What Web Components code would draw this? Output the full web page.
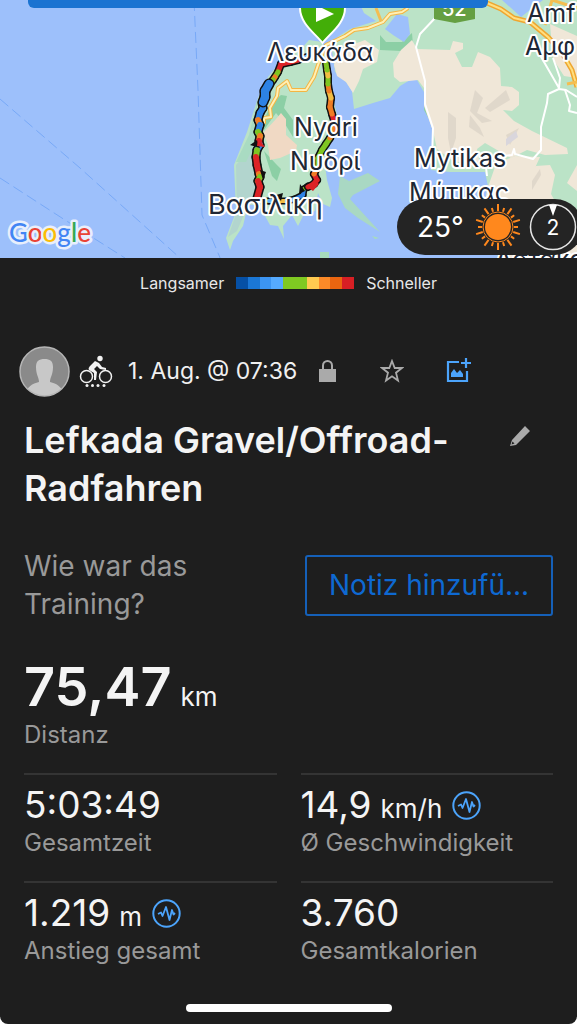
<!DOCTYPE html>
<html lang="de">
<head>
<meta charset="utf-8">
<meta name="viewport" content="width=device-width, initial-scale=1">
<title>Lefkada Gravel/Offroad-Radfahren</title>
<style>
html{background:#fff}
body{margin:0;font-family:Inter,"Noto Sans",sans-serif;color:#f4f4f4}
</style>
</head>
<body>
<workout-page></workout-page>
<script>
const define = (name, html, setup) => customElements.define(name, class extends HTMLElement {
  constructor() {
    super();
    const t = document.createElement('template');
    t.innerHTML = html;
    this.attachShadow({ mode: 'open' }).append(t.content.cloneNode(true));
  }
  connectedCallback() { if (setup) setup(this, this.shadowRoot); }
});

define('route-map', `
<style>
:host{display:block;position:relative;height:258px;overflow:hidden;background:#9dc0fb}
svg{display:block;width:100%;height:100%}
.label{font:25px Inter,"Noto Sans",sans-serif;fill:#202735;stroke:#fff;stroke-width:4;stroke-linejoin:round;paint-order:stroke}
.logo{font:500 26px Lato,sans-serif;stroke:#e8effc;stroke-width:5;stroke-linejoin:round;paint-order:stroke}
.banner{position:absolute;top:0;left:28px;right:89px;height:8px;background:#1b73d1;border-radius:0 0 6px 6px}
::slotted(*){position:absolute;right:-6px;bottom:3px}
</style>
<svg viewBox="0 0 577 258" preserveAspectRatio="xMidYMid slice" role="img" aria-label="Karte der Strecke">
  <g fill="none" stroke="#78a9f7" stroke-width="1" stroke-dasharray="11 5">
    <path d="M194 0 198 90 202 215 221 260"/><path d="M0 99 80 168 180 258"/><path d="M0 178 65 220 125 258"/>
  </g>
  <path fill="#bbe3c7" d="M358 0 364 13 376 21 350 29 339 36 331 43 335 72 346 82 352 91 354 109 373 103 390 98 400 86 410 80 417 80 424 92 425 105 432 128 433 150 431 170 450 172 485 172 488 186 484 205 480 225 495 240 503 258H577V0Z"/>
  <path fill="#bbe3c7" d="M302 48 309 40 322 42 329 58 331 90 337 115 333 138 324 158 327 180 332 198 330 207 323 204 318 193 315 211 303 216 298 226 292 215 283 226 284 239 278 226 270 225 259 205 248 205 243 226 233 241 230 250 226 238 236 212 234 165 247 132 258 98 268 77 281 61Z"/>
  <path fill="#b2d5ce" d="M236 165 254 145 259 203 248 205 237 231 228 237 237 211Z"/>
  <path fill="#a9dbc2" d="M257 101 249 135 236 162 246 162 257 139Z"/>
  <g fill="#8ccfa5">
    <path d="M271 104 281 95 287 96 284 108 293 120 293 137 285 124 276 113 264 130 262 125Z"/>
    <path d="M264 151 276 164 281 169 277 181 272 176Z"/>
    <path d="M380 35 386 42 402 42 412 33 413 45 401 51 380 50Z"/>
    <path d="M425 94 437 103 438 120 434 128 424 110Z"/>
  </g>
  <path fill="#f0d9c4" d="M263 133 276 119 281 113 286 119 286 135 297 145 296 151 280 158 270 160 268 145Z"/>
  <g fill="#f0e7d8">
    <path d="M334 65 338 50 365 40 379 50 377 62 363 69 359 81 353 93 346 82 337 76Z"/>
    <path d="M393 63 401 50 412 40 417 49 450 50 453 41 463 43 463 49 455 53 462 67 472 67 478 52 490 57 500 68 501 86 512 87 519 92 519 105 512 111 503 110 514 121 532 131 567 148 568 154 545 155 527 150 511 158 485 143 477 149 480 165 469 165 452 160 437 149 433 131 424 106 424 88 418 80 400 82 394 77Z"/>
    <path d="M550 24 577 36V78L564 76 553 59Z"/><path d="M577 165 567 183 577 191Z"/>
    <path d="M496 164 515 156 540 157 535 168 536 166 550 165 555 175 551 194 560 210 577 222V258H500L483 221 487 190Z"/>
  </g>
  <g fill="#d9d1c5" opacity=".65">
    <path d="m448 112 8 6 0 20-5 15-3-15Z"/><path d="m470 115 10 13 4 9-15-10Z"/><path d="m485 108 21-18 4 10-20 12Z"/><path d="m475 90 8 8-6 15 15 8-10 2-12-12Z"/><path d="m506 135 13-7-9 17Z"/><path d="m532 181 8-12 1 6-9 15Z"/>
  </g>
  <g fill="#9dc0fb"><path d="M385 29 397 14 408 17 410 34 404 42 393 35Z"/><path d="M502 0H543L530 10 521 17Z"/></g>
  <path fill="#d9d6dc" d="m506 139 10-8 2 6-12 9Z"/>
  <path fill="#a9d8c3" d="M340 176 349 181 368 173 380 181 353 195 350 199 380 232 358 218 345 208 338 194Z"/>
  <path fill="#a7dcbc" d="m372 236 7 2-4 1ZM320 252l9 0 0 6h-9Z"/>
  <g fill="none" stroke="#fff" stroke-width="2" stroke-linejoin="round">
    <path d="M436 17 420 34 416 47 425 81 425 104 433 128 432 160"/>
    <path d="M577 97 566 90 559 89 548 94 547 103 541 127 541 150 533 159 515 154 514 149 512 155 485 158 487 176"/>
    <path d="m540 55 19 33 1-10-7-20m12 32 5 15-1 6 8 2"/>
  </g>
  <g fill="none" stroke-linejoin="round">
    <path stroke="#f4b543" stroke-width="4" d="M264 124 264 118 271 117 270 108 277 96 278 88 287 81 291 90 306 90 314 77 318 65 326 45 345 36 354 30 368 28 383 22 390 14 402 12 408 8"/>
    <path stroke="#fff0b5" stroke-width="2" d="M264 124 264 118 271 117 270 108 277 96 278 88 287 81 291 90 306 90 314 77 318 65 326 45 345 36 354 30 368 28 383 22 390 14 402 12 408 8"/>
    <path stroke="#efa62f" stroke-width="5" d="M480 0 501 9 514 18 530 22 548 37 562 53 572 70 577 87"/>
    <path stroke="#ffdf80" stroke-width="2" d="M480 0 501 9 514 18 530 22 548 37 562 53 572 70 577 87"/>
    <path stroke="#f4be50" stroke-width="3" d="M381 21 376 8M545 25 552 0 577 8M567 84 577 82"/>
  </g>
  <g id="route" fill="none"></g>
  <path fill="#111" d="m250 145 7-5 3 8ZM260 170l6 2-3 8ZM276 195l7-2-2 8ZM300 184l-1 10 6-3Z"/>
  <path fill="#dc2326" d="m258 138 7 9-8-1ZM307 187l7-7 5 4-6 7Z"/>
  <path fill="#43ae08" stroke="#fff" stroke-width="2" d="M322.500 43C316 34 300 24 300 8A22 22 0 0 1 345 8C345 24 329 34 322.500 43Z"/>
  <path fill="#fff" d="M316 5V22L334 14Z"/>
  <path fill="#659f42" d="M434 0H475V19L455 23 434 19Z"/>
  <text x="442" y="16" font-family="Inter" font-weight="500" font-size="20" fill="#fff">52</text>
  <g class="label">
    <text x="267" y="61">Λευκάδα</text><text x="294" y="136">Nydri</text><text x="290" y="170">Νυδρί</text>
    <text x="208" y="214" font-size="27">Βασιλικη</text><text x="414" y="167">Mytikas</text><text x="409" y="201">Μύτικας</text>
    <text x="527" y="22">Amf</text><text x="525" y="55">Αμφ</text><text x="495" y="268">Αστακο</text>
  </g>
  <text class="logo" x="9" y="242"><tspan fill="#4285f4">G</tspan><tspan fill="#ea4335">o</tspan><tspan fill="#fbbc05">o</tspan><tspan fill="#4285f4">g</tspan><tspan fill="#34a853">l</tspan><tspan fill="#ea4335">e</tspan></text>
</svg>
<div class="banner"></div>
<slot></slot>`, (host, root) => {
  const R = '#dc2326', B = '#2d82e5', G = '#7fc522', Y = '#f2bd42', O = '#ef7d25', L = '#62aef7';
  const draw = (points, width) => {
    let base = '', colour = '';
    for (let i = 1; i < points.length; i++) {
      const [x, y] = points[i - 1], [u, v, c] = points[i];
      base += `<path d="M${x} ${y}L${u} ${v}" stroke="#111" stroke-width="${width + 3}" stroke-linecap="round"/>`;
      colour += `<path d="M${x} ${y}L${u} ${v}" stroke="${c}" stroke-width="${width}" stroke-linecap="round"/>`;
    }
    root.querySelector('#route').innerHTML += base + colour;
  };
  draw([[307,57],[298,60,L],[290,62,R],[281,64,R],[278,72,R],[275,77,G],[273,80,O],[270,84,G]], 5);
  draw([[262,103],[263,108,G],[260,113,B],[258,120,B],[260,125,O],[258,132,B],[260,136,G],[259,141,O],[260,145,R],[257,150,B],[256,157,G],[257,165,R],[259,174,R],[260,177,O],[258,181,G],[260,187,R],[257,198,R]], 6);
  draw([[269,84],[265,91,B],[265,97,B],[263,102,B]], 8);
  draw([[264,201],[269,201,G],[275,201,L],[280,201,R],[287,201,Y],[295,199,L],[303,195,B],[304,189,B],[308,186,G]], 4);
  draw([[308,187],[314,184,R],[317,180,R],[314,174,R],[318,166,O],[318,158,G],[322,150,G],[326,144,G],[330,138,G],[334,130,O],[335,124,O],[332,114,R],[330,107,O],[331,98,O],[329,91,Y],[328,84,O],[328,76,G],[327,70,Y],[326,63,G]], 5);
});

define('weather-pill', `
<style>
:host{display:flex;align-items:center;box-sizing:border-box;height:56px;padding:0 6px 0 20px;gap:8px;border-radius:28px;background:#242424;color:#fff;font-size:28px;line-height:32px;white-space:nowrap}
svg{display:block;flex:none}
span{width:50px}
</style>
<span><slot></slot></span>
<svg width="46" height="46" viewBox="-23 -23 46 46" aria-hidden="true"><circle r="13" fill="#ff881d"/><circle r="15" fill="none" stroke="#ff881d"/><g id="rays" stroke="#ff881d" stroke-width="2"></g></svg>
<svg width="48" height="48" viewBox="0 0 48 48" aria-label="Wind 2"><circle cx="24" cy="24" r="22.500" fill="none" stroke="#e6e6e6" stroke-width="1.500"/><path fill="#fff" d="M20 2h8l-4 11Z"/><text x="24" y="32" text-anchor="middle" font-family="Inter" font-size="21" fill="#fff">2</text></svg>`,
(host, root) => {
  root.querySelector('#rays').innerHTML = Array.from({ length: 20 }, (_, i) => `<path d="M0-16V${i % 2 ? -20 : -23}" transform="rotate(${i * 18})"/>`).join('');
});

define('speed-legend', `
<style>
:host{display:flex;justify-content:center;align-items:center;gap:12px;height:50px;font-size:16px;line-height:20px;color:#e8e8e8}
.bar{width:118px;height:12px;background:linear-gradient(90deg,#0650a5 10%,#1b77d5 10% 20%,#3c95f3 20% 30%,#55aaff 30% 40%,#7fc922 40% 60%,#ffca50 60% 70%,#fb8a28 70% 80%,#ea6510 80% 90%,#d71f24 90%)}
</style><slot name="slow"></slot><div class="bar"></div><slot name="fast"></slot>`);

define('icon-button', `
<style>:host{display:block}button{display:flex;margin:0;padding:0;border:0;background:none;color:inherit}</style>
<button type="button"><slot></slot></button>`, (host, root) => root.querySelector('button').setAttribute('aria-label', host.getAttribute('label')));

define('workout-meta', `
<style>
:host{display:flex;align-items:center;height:52px;padding-left:19px;color:#aaa}
svg{display:block;flex:none}
.bike{margin:0 15px 0 9px}
time{width:190px;font-size:23px;line-height:28px;color:#f0f0f0;white-space:nowrap}
.photo{color:#4ca4fb}
.star{margin:0 41px 0 43px}
</style>
<svg width="51" height="51" viewBox="0 0 51 51" role="img" aria-label="Profil"><defs><clipPath id="c"><circle cx="25.500" cy="25.500" r="24.500"/></clipPath></defs><circle cx="25.500" cy="25.500" r="24.500" fill="#8a8a8a"/><g clip-path="url(#c)" fill="#c8c8c8"><path d="M17 21C17 15 20 13 25.500 13S34 15 34 21C34 29 31 31 31 36C38 38 43 40 46 51H5C8 40 13 38 20 36C20 31 17 29 17 21Z"/></g><circle cx="25.500" cy="25.500" r="24.500" fill="none" stroke="#b5b5b5" stroke-width="1.500"/></svg>
<svg class="bike" width="34" height="34" viewBox="0 0 34 34" fill="none" stroke="#f2f2f2" aria-hidden="true"><g stroke-width="1.500"><circle cx="7.500" cy="22.500" r="6"/><circle cx="26.500" cy="22.500" r="6"/></g><circle cx="21" cy="4.500" r="2.700" fill="#f2f2f2" stroke="none"/><path fill="#f2f2f2" stroke="none" d="M16 7 20 9 23 13 27 14V16L21 15 18 12 15 15 18 18 17 26H15L15 19 10 16C9 15 10 13 11 12Z"/><g fill="#f2f2f2" stroke="none"><circle cx="8" cy="31.500" r="1.500"/><circle cx="13.500" cy="31.500" r="1.500"/><circle cx="19" cy="31.500" r="1.500"/><circle cx="25" cy="31.500" r="1.500"/></g></svg>
<time><slot></slot></time>
<icon-button label="Privat"><svg width="19" height="24" viewBox="0 0 19 24"><path d="M5 11V6.500a4.500 4.500 0 0 1 9 0V11" fill="none" stroke="currentColor" stroke-width="2"/><path d="M1 10H18V23H1Z" fill="currentColor"/></svg></icon-button>
<icon-button class="star" label="Favorit"><svg width="24" height="24" viewBox="0 0 24 24"><path d="m12 2 2.700 7H22l-6 4.700 2 7.800-6-4.200-6 4.200 2-7.800L2 9h7.300Z" fill="none" stroke="currentColor" stroke-width="1.800"/></svg></icon-button>
<icon-button class="photo" label="Foto hinzufügen"><svg width="26" height="26" viewBox="0 0 26 26"><path d="M14 4H3V23H22V13M21 0V10M16 5H26" fill="none" stroke="currentColor" stroke-width="2.200"/><path fill="currentColor" d="M6 19V15L9 11 12 15 15 12 18 16V19Z"/></svg></icon-button>`);

define('workout-title', `
<style>
:host{display:flex;align-items:flex-start;justify-content:space-between;padding:0 46px 0 24px;margin-top:19px}
h1{flex:1;margin:0;font-size:36px;line-height:48px;font-weight:600}
icon-button{margin-top:9px;color:#aaa}
svg{display:block}
</style>
<h1><slot></slot></h1>
<icon-button label="Bearbeiten"><svg width="22" height="22" viewBox="0 0 22 22"><path fill="currentColor" fill-rule="evenodd" d="M16 1 21 6 7 20 1 21 3 15ZM3.500 16.500 2.500 19.500 5.500 18.500Z"/></svg></icon-button>`);

define('note-prompt', `
<style>
:host{display:grid;grid-template-columns:1fr 248px;align-items:center;padding:0 24px;margin-top:35px;color:#999}
p{margin:0;width:190px;font-size:28px;line-height:38px}
button{display:block;box-sizing:border-box;width:100%;height:61px;padding:0 22px;border:2px solid #1560b8;border-radius:3px;background:none;font:28px/36px Inter,sans-serif;color:#0e69d2;white-space:nowrap}
</style><p><slot></slot></p><button type="button"><slot name="action"></slot></button>`);

define('stat-item', `
<style>
:host{display:block;box-sizing:border-box;height:108px;border-top:2px solid #343434;padding-top:8px;white-space:nowrap}
.row{display:flex;align-items:baseline;height:44px;line-height:44px;font-size:37px}
.unit{font-size:26px;margin-left:9px}
.unit:empty{display:none}
svg{display:none;align-self:center;margin-left:10px}
:host([chart]) svg{display:block}
.label{font-size:24px;line-height:32px;color:#999}
:host([primary]){height:auto;padding:0;border:0}
:host([primary]) .row{height:64px;line-height:64px;font-size:54px;font-weight:600}
:host([primary]) .unit{font-weight:400}
</style>
<div class="row"><span><slot></slot></span><span class="unit"></span><svg width="29" height="29" viewBox="0 0 29 29" fill="none" stroke="#4ca4fb" aria-hidden="true"><circle cx="14.500" cy="14.500" r="13.200" stroke-width="2"/><path stroke-width="1.800" stroke-linejoin="round" d="M6 15 9 13.500 10.500 17 14 8 17.500 21 20 11 21.500 15.500 23 14"/></svg></div>
<div class="label"></div>`, (host, root) => {
  root.querySelector('.unit').textContent = host.getAttribute('unit') || '';
  root.querySelector('.label').textContent = host.getAttribute('label');
});

define('stat-grid', `
<style>:host{display:grid;grid-template-columns:1fr 1fr;column-gap:24px;padding:0 24px;margin-top:22px}</style><slot></slot>`);

define('workout-page', `
<style>
:host{display:flex;flex-direction:column;box-sizing:border-box;min-height:100vh;background:#1e1e1e;border-radius:0 0 8px 8px;overflow:hidden}
speed-legend{margin-bottom:37px}
.primary{padding:0 24px;margin-top:32px}
.home{width:206px;height:8px;border-radius:4px;background:#fff;margin:auto auto 12px}
</style>
<route-map><weather-pill>25°</weather-pill></route-map>
<speed-legend><span slot="slow">Langsamer</span><span slot="fast">Schneller</span></speed-legend>
<workout-meta>1. Aug. @ 07:36</workout-meta>
<workout-title>Lefkada Gravel/Offroad-Radfahren</workout-title>
<note-prompt>Wie war das Training?<span slot="action">Notiz hinzufü...</span></note-prompt>
<div class="primary"><stat-item primary unit="km" label="Distanz">75,47</stat-item></div>
<stat-grid>
  <stat-item label="Gesamtzeit">5:03:49</stat-item>
  <stat-item chart unit="km/h" label="Ø Geschwindigkeit">14,9</stat-item>
  <stat-item chart unit="m" label="Anstieg gesamt">1.219</stat-item>
  <stat-item label="Gesamtkalorien">3.760</stat-item>
</stat-grid>
<div class="home"></div>`);
</script>
</body>
</html>
